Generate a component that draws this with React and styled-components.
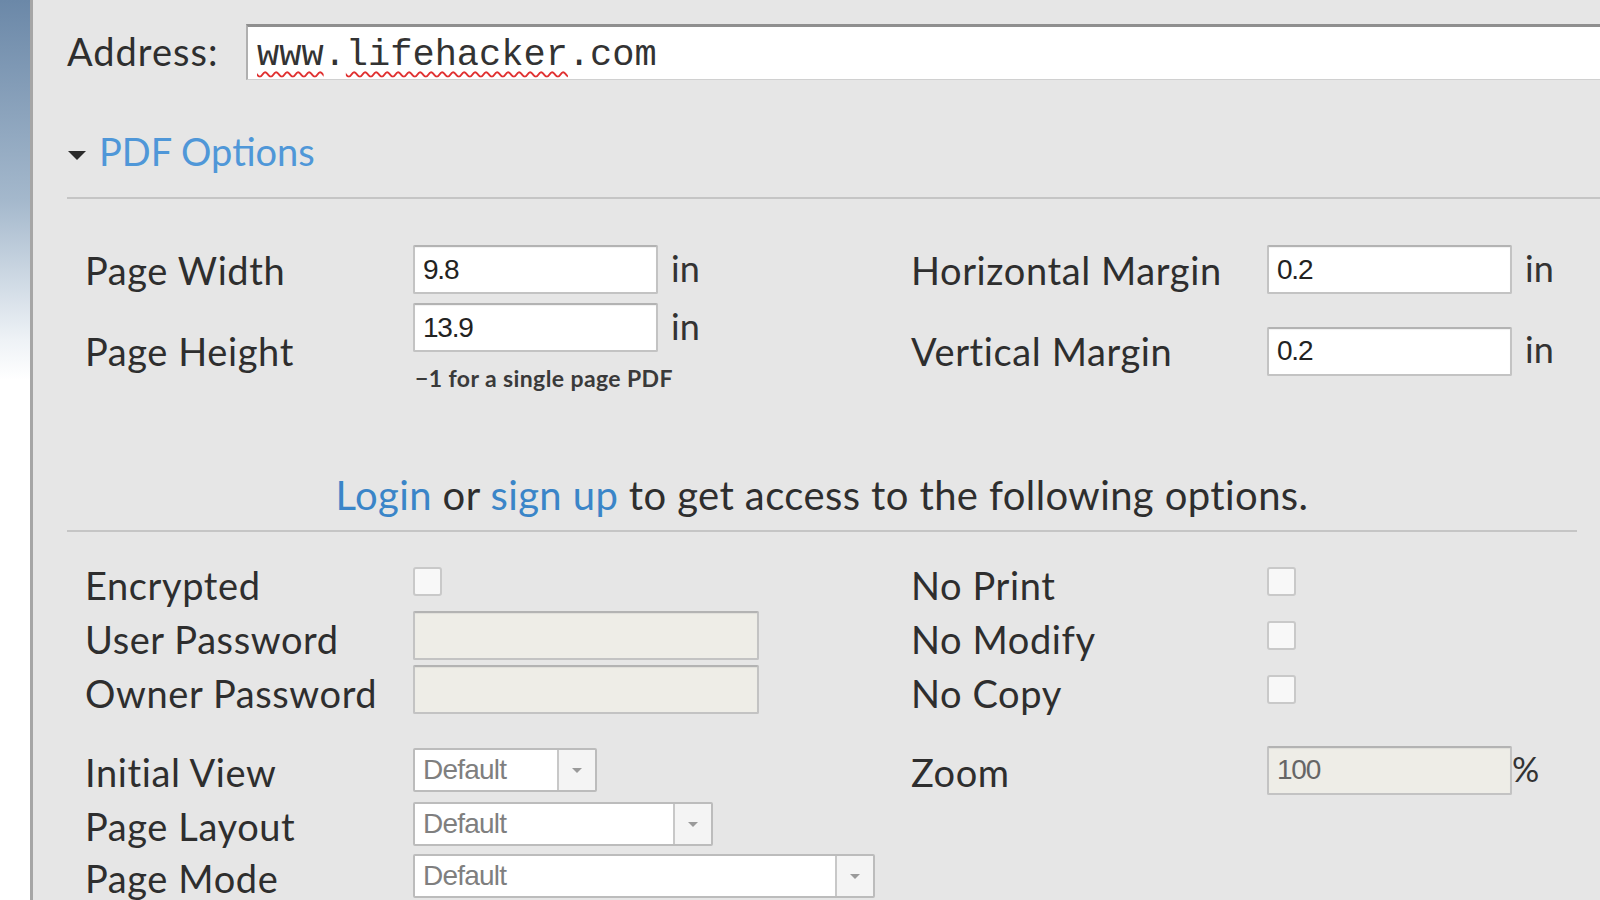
import React from "react";
import styled, { createGlobalStyle } from "styled-components";

const GlobalStyle = createGlobalStyle`
  html, body { margin: 0; padding: 0; }
  body {
    width: 1600px;
    height: 900px;
    overflow: hidden;
    background: #e6e6e6;
    font-family: Lato, "Open Sans", sans-serif;
    color: #333;
  }
`;

const Page = styled.div`
  display: flex;
  height: 900px;
  overflow: hidden;
`;

const Sidebar = styled.div`
  flex: 0 0 30px;
  background: linear-gradient(to bottom, #6b88a8 0px, #a4b8cc 200px, #eef2f6 340px, #ffffff 380px, #ffffff 100%);
  border-right: 3px solid #a6a6a6;
`;

const Main = styled.div`
  flex: 1;
  padding: 24px 23px 0 34px;
  min-width: 0;
`;

const AddressRow = styled.div`
  display: flex;
  align-items: center;
  gap: 27px;
  margin-right: -60px;
`;

const AddressLabel = styled.label`
  flex: 0 0 152px;
  font-size: 38px;
  color: #2e2e2e;
  letter-spacing: 1px;
  margin-top: -2px;
`;

const AddressInput = styled.div`
  flex: 1;
  height: 56px;
  box-sizing: border-box;
  background: #fff;
  border-top: 3px solid #8f8f8f;
  border-left: 2px solid #b0b0b0;
  border-bottom: 1px solid #d0d0d0;
  padding: 3px 0 0 9px;
  display: flex;
  align-items: center;
  font-family: "Liberation Mono", "Courier New", monospace;
  font-size: 37px;
  color: #333;
`;

const Misspelled = styled.span`
  text-decoration: underline wavy #e03030;
  text-decoration-thickness: 1.5px;
  text-underline-offset: 6px;
`;

const SectionHeader = styled.div`
  display: flex;
  align-items: center;
  margin-top: 48px;
  height: 46px;
`;

const Caret = styled.span`
  width: 0;
  height: 0;
  border-left: 9px solid transparent;
  border-right: 9px solid transparent;
  border-top: 9px solid #2b2b2b;
  margin: 8px 13px 0 1px;
`;

const HeaderLink = styled.span`
  font-size: 38px;
  color: #4f97d8;
`;

const Rule = styled.hr`
  border: none;
  height: 2px;
  background: #c5c5c5;
  margin: ${(p) => p.$mt}px ${(p) => (p.$extend ? -23 : 0)}px 0 0;
`;

const Grid = styled.div`
  display: grid;
  grid-template-columns: 328px 498px 356px 1fr;
  grid-template-rows: ${(p) => p.$rows};
  row-gap: ${(p) => p.$gap}px;
  align-items: center;
  padding-left: 18px;
  margin-top: ${(p) => p.$mt}px;
`;

const Label = styled.div`
  font-size: 38px;
  color: #2e2e2e;
  white-space: nowrap;
  letter-spacing: 0.6px;
  padding-top: ${(p) => p.$pt ?? 4}px;
`;

const FieldCell = styled.div`
  display: flex;
  flex-direction: ${(p) => (p.$column ? "column" : "row")};
  align-items: ${(p) => (p.$column ? "flex-start" : "center")};
  padding-top: ${(p) => p.$offset || 0}px;
`;

const InputRow = styled.div`
  display: flex;
  align-items: center;
`;

const TextInput = styled.div`
  width: ${(p) => p.$w}px;
  height: 49px;
  box-sizing: border-box;
  background: ${(p) => (p.$disabled ? "#eeede7" : "#ffffff")};
  border: 2px solid #c3c3c3;
  border-top-color: #b3b3b3;
  border-radius: 2px;
  box-shadow: inset 0 1px 1px rgba(0, 0, 0, 0.06);
  padding-left: 8px;
  display: flex;
  align-items: center;
  font-family: "Liberation Sans", Arial, sans-serif;
  font-size: 28px;
  letter-spacing: -1.2px;
  color: ${(p) => (p.$disabled ? "#666" : "#222")};
`;

const Unit = styled.span`
  font-size: ${(p) => p.$size || 36}px;
  color: #333;
  margin-left: ${(p) => p.$ml}px;
  margin-top: -4px;
`;

const Hint = styled.div`
  font-size: 23px;
  line-height: 26px;
  margin-top: 13px;
  color: #3a3a3a;
  font-weight: 700;
  letter-spacing: 0.4px;
  padding-left: 2px;
`;

const Notice = styled.p`
  margin: 80px 0 0;
  text-align: center;
  font-size: 40px;
  line-height: 46px;
  letter-spacing: 0.4px;
  color: #2e2e2e;
`;

const Link = styled.a`
  color: #3a85c8;
  text-decoration: none;
`;

const Checkbox = styled.span`
  display: block;
  width: 29px;
  height: 29px;
  box-sizing: border-box;
  background: #f8f8f8;
  border: 2px solid #c9c9c9;
  border-radius: 3px;
`;

const SelectBox = styled.div`
  width: ${(p) => p.$w}px;
  height: 44px;
  box-sizing: border-box;
  display: flex;
  background: #fff;
  border: 2px solid #bcbcbc;
  border-radius: 2px;
  font-family: "Liberation Sans", Arial, sans-serif;
  font-size: 28px;
  letter-spacing: -0.8px;
  color: #7f7f7f;
`;

const SelectValue = styled.span`
  flex: 1;
  display: flex;
  align-items: center;
  padding-left: 8px;
`;

const SelectButton = styled.span`
  flex: 0 0 36px;
  display: flex;
  align-items: center;
  justify-content: center;
  background: #f4f4f4;
  border-left: 2px solid #c8c8c8;
  &::after {
    content: "";
    width: 0;
    height: 0;
    border-left: 5px solid transparent;
    border-right: 5px solid transparent;
    border-top: 5px solid #9a9a9a;
  }
`;

const Select = ({ w }) => (
  <SelectBox $w={w}>
    <SelectValue>Default</SelectValue>
    <SelectButton />
  </SelectBox>
);

export default function App() {
  return (
    <>
      <GlobalStyle />
      <Page>
        <Sidebar />
        <Main>
          <AddressRow>
            <AddressLabel>Address:</AddressLabel>
            <AddressInput>
              <Misspelled>www</Misspelled>.<Misspelled>lifehacker</Misspelled>.com
            </AddressInput>
          </AddressRow>

          <SectionHeader>
            <Caret />
            <HeaderLink>PDF Options</HeaderLink>
          </SectionHeader>
          <Rule $mt={23} $extend />

          <Grid $rows="49px 90px" $gap={8} $mt={46}>
            <Label $pt={0}>Page Width</Label>
            <FieldCell>
              <TextInput $w={245}>9.8</TextInput>
              <Unit $ml={13}>in</Unit>
            </FieldCell>
            <Label $pt={0}>Horizontal Margin</Label>
            <FieldCell>
              <TextInput $w={245}>0.2</TextInput>
              <Unit $ml={13}>in</Unit>
            </FieldCell>

            <Label $pt={8}>Page Height</Label>
            <FieldCell $column>
              <InputRow>
                <TextInput $w={245}>13.9</TextInput>
                <Unit $ml={13}>in</Unit>
              </InputRow>
              <Hint>−1 for a single page PDF</Hint>
            </FieldCell>
            <Label $pt={8}>Vertical Margin</Label>
            <FieldCell $offset={8}>
              <TextInput $w={245}>0.2</TextInput>
              <Unit $ml={13}>in</Unit>
            </FieldCell>
          </Grid>

          <Notice>
            <Link href="#">Login</Link> or <Link href="#">sign up</Link> to get access to the following options.
          </Notice>
          <Rule $mt={12} />

          <Grid $rows="48px 48px 48px" $gap={6} $mt={25}>
            <Label $pt={7}>Encrypted</Label>
            <FieldCell>
              <Checkbox />
            </FieldCell>
            <Label $pt={7}>No Print</Label>
            <FieldCell>
              <Checkbox />
            </FieldCell>

            <Label $pt={7}>User Password</Label>
            <FieldCell>
              <TextInput $w={346} $disabled />
            </FieldCell>
            <Label $pt={7}>No Modify</Label>
            <FieldCell>
              <Checkbox />
            </FieldCell>

            <Label $pt={7}>Owner Password</Label>
            <FieldCell>
              <TextInput $w={346} $disabled />
            </FieldCell>
            <Label $pt={7}>No Copy</Label>
            <FieldCell>
              <Checkbox />
            </FieldCell>
          </Grid>

          <Grid $rows="48px 44px 44px" $gap={8} $mt={33}>
            <Label>Initial View</Label>
            <FieldCell>
              <Select w={184} />
            </FieldCell>
            <Label>Zoom</Label>
            <FieldCell>
              <TextInput $w={245} $disabled>100</TextInput>
              <Unit $ml={0} $size={34}>%</Unit>
            </FieldCell>

            <Label>Page Layout</Label>
            <FieldCell>
              <Select w={300} />
            </FieldCell>
            <div />
            <div />

            <Label>Page Mode</Label>
            <FieldCell>
              <Select w={462} />
            </FieldCell>
            <div />
            <div />
          </Grid>
        </Main>
      </Page>
    </>
  );
}
